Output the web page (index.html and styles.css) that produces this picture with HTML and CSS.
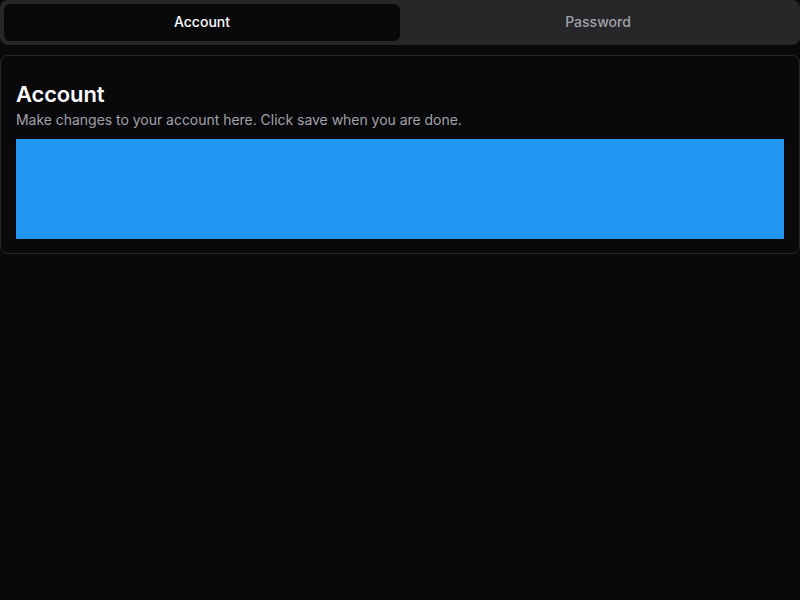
FILE: index.html
```html
<!DOCTYPE html>
<html>
<head>
<meta charset="utf-8">
<link rel="stylesheet" href="styles.css">
</head>
<body>
<div class="tabs">
  <div class="tab-list">
    <button class="tab active">Account</button>
    <button class="tab">Password</button>
  </div>
  <div class="card">
    <h2 class="card-title">Account</h2>
    <p class="card-desc">Make changes to your account here. Click save when you are done.</p>
    <div class="card-body"></div>
  </div>
</div>
</body>
</html>
```

FILE: styles.css
```css
html, body {
  margin: 0;
  padding: 0;
  background: #09090b;
  font-family: Inter, "Noto Sans", sans-serif;
  color: #fafafa;
}
.tabs {
  display: flex;
  flex-direction: column;
  gap: 10px;
}
.tab-list {
  display: grid;
  grid-template-columns: 1fr 1fr;
  padding: 4px;
  background: #27272a;
  border-radius: 8px;
  height: 45px;
  box-sizing: border-box;
}
.tab {
  border: 0;
  background: transparent;
  color: #a1a1aa;
  font-family: inherit;
  font-size: 14px;
  font-weight: 500;
  border-radius: 6px;
  height: 37px;
  padding: 0 0 2px;
  cursor: pointer;
}
.tab.active {
  background: #09090b;
  color: #fafafa;
}
.card {
  border: 1px solid #27272a;
  border-radius: 8px;
  padding: 24px 15px 14px;
  display: flex;
  flex-direction: column;
}
.card-title {
  margin: 0;
  font-size: 22px;
  font-weight: 600;
  line-height: 28px;
  letter-spacing: -0.15px;
}
.card-desc {
  margin: 2px 0 9px;
  font-size: 14px;
  line-height: 20px;
  color: #a1a1aa;
  letter-spacing: -0.03px;
}
.card-body {
  height: 100px;
  background: #2196f3;
}
```
